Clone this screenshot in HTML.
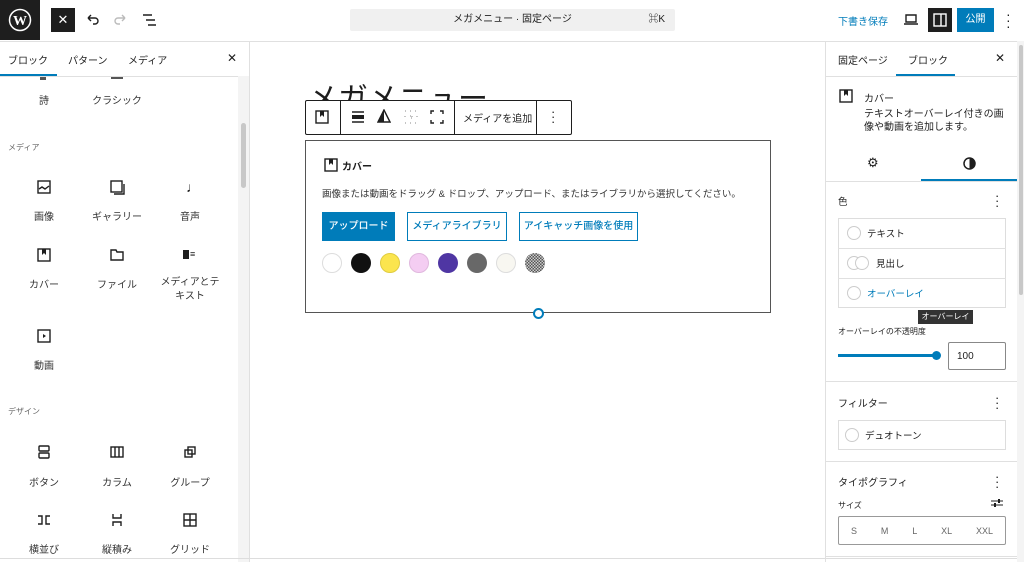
<!DOCTYPE html>
<html><head><meta charset="utf-8"><style>
*{box-sizing:border-box;margin:0;padding:0}
body{width:1024px;height:562px;overflow:hidden;background:#fff;font-family:"Liberation Sans","Noto Sans CJK JP",sans-serif;color:#1e1e1e;position:relative;font-size:11px}
.a{position:absolute}
.c{text-align:center}
svg{display:block}
.ic{stroke:#1e1e1e;fill:none;stroke-width:1.4}
.lbl{font-size:10px;color:#333;width:80px;text-align:center}
.sep{border-top:1px solid #e0e0e0}
</style></head><body>
<!-- top bar -->
<div class="a" style="left:0;top:0;width:40px;height:40px;background:#1e1e1e"></div>
<svg class="a" style="left:8px;top:8px" width="24" height="24" viewBox="0 0 24 24"><circle cx="12" cy="12" r="10.5" fill="none" stroke="#fff" stroke-width="1.5"/><text x="12" y="17" font-size="14" font-weight="bold" fill="#fff" text-anchor="middle" font-family="Liberation Serif">W</text></svg>
<div class="a c" style="left:51px;top:8px;width:24px;height:24px;background:#1e1e1e;color:#fff;font-size:13px;line-height:24px">✕</div>
<svg class="a" style="left:84px;top:12px" width="16" height="16"><path d="M4 6h7a3 3 0 0 1 0 6H9M4 6l3-3M4 6l3 3" class="ic"/></svg>
<svg class="a" style="left:113px;top:12px" width="16" height="16"><path d="M12 6H5a3 3 0 0 0 0 6h2M12 6l-3-3M12 6l-3 3" fill="none" stroke="#bbb" stroke-width="1.4"/></svg>
<svg class="a" style="left:142px;top:12px" width="16" height="16"><path d="M1 3h9M4 8h9M6 13h8" class="ic"/></svg>
<div class="a c" style="left:350px;top:9px;width:325px;height:22px;background:#f0f0f0;border-radius:2px;font-size:10px;line-height:22px">メガメニュー · 固定ページ<span class="a" style="right:10px;top:0">⌘K</span></div>
<div class="a" style="left:838px;top:13px;font-size:10px;color:#007cba">下書き保存</div>
<svg class="a" style="left:903px;top:13px" width="16" height="14"><path d="M3 2h10v7H3zM1 11h14" class="ic"/></svg>
<div class="a" style="left:928px;top:8px;width:24px;height:24px;background:#1e1e1e"></div>
<svg class="a" style="left:932px;top:12px" width="16" height="16"><rect x="2" y="2" width="12" height="12" fill="none" stroke="#fff" stroke-width="1.4"/><path d="M9 2v12" stroke="#fff" stroke-width="1.4"/></svg>
<div class="a c" style="left:957px;top:8px;width:37px;height:24px;background:#007cba;color:#fff;font-size:10px;line-height:24px">公開</div>
<div class="a" style="left:1006px;top:11px;font-size:14px;line-height:6px;width:4px;text-align:center">·<br>·<br>·</div>
<div class="a sep" style="left:0;top:41px;width:1024px"></div>
<!-- left panel -->
<div class="a" style="left:249px;top:41px;height:521px;border-left:1px solid #e0e0e0"></div>
<div class="a" style="left:8px;top:52px;font-size:10px">ブロック</div>
<div class="a" style="left:68px;top:52px;font-size:10px">パターン</div>
<div class="a" style="left:128px;top:52px;font-size:10px">メディア</div>
<div class="a" style="left:227px;top:51px;font-size:12px">✕</div>
<div class="a" style="left:0;top:74px;width:57px;height:2px;background:#007cba"></div>
<div class="a sep" style="left:0;top:76px;width:249px"></div>
<div class="a" style="left:238px;top:76px;width:11px;height:486px;background:#f4f4f4"></div>
<div class="a" style="left:241px;top:123px;width:5px;height:65px;background:#c8c8c8;border-radius:3px"></div>
<div class="a" style="left:40px;top:77px;width:6px;height:3px;background:#555"></div>
<div class="a" style="left:111px;top:77px;width:12px;height:2px;background:#555"></div>
<div class="a lbl" style="left:4px;top:92px">詩</div>
<div class="a lbl" style="left:77px;top:92px">クラシック</div>
<div class="a" style="left:8px;top:142px;font-size:8px;color:#666">メディア</div>
<svg class="a" style="left:37px;top:180px" width="14" height="14"><rect x="1" y="1" width="12" height="12" class="ic" stroke-width="1.2"/><path d="M2 9l3-2 3 2 4-3" class="ic" stroke-width="1"/></svg>
<svg class="a" style="left:110px;top:180px" width="16" height="16"><rect x="1" y="1" width="11" height="11" class="ic" stroke-width="1.2"/><path d="M14 4v10H4" class="ic" stroke-width="1.2"/></svg>
<div class="a" style="left:186px;top:179px;font-size:14px">♩</div>
<div class="a lbl" style="left:4px;top:208px">画像</div>
<div class="a lbl" style="left:77px;top:208px">ギャラリー</div>
<div class="a lbl" style="left:150px;top:208px">音声</div>
<svg class="a" style="left:37px;top:248px" width="14" height="14"><rect x="1" y="1" width="12" height="12" class="ic" stroke-width="1.2"/><path d="M5 1h4v6L7 5 5 7z" fill="#1e1e1e"/></svg>
<svg class="a" style="left:110px;top:248px" width="14" height="14"><path d="M1 2h5l1 2h6v8H1z" class="ic" stroke-width="1.2"/></svg>
<div class="a" style="left:183px;top:250px;width:6px;height:9px;background:#1e1e1e"></div><div class="a" style="left:190px;top:249px;font-size:9px">≡</div>
<div class="a lbl" style="left:4px;top:276px">カバー</div>
<div class="a lbl" style="left:77px;top:276px">ファイル</div>
<div class="a lbl" style="left:150px;top:276px;line-height:14px">メディアとテ<br>キスト</div>
<svg class="a" style="left:37px;top:329px" width="14" height="14"><rect x="1" y="1" width="12" height="12" class="ic" stroke-width="1.2"/><path d="M6 5l3 2-3 2z" fill="#1e1e1e"/></svg>
<div class="a lbl" style="left:4px;top:357px">動画</div>
<div class="a" style="left:8px;top:406px;font-size:8px;color:#666">デザイン</div>
<svg class="a" style="left:37px;top:445px" width="14" height="14"><rect x="2" y="1" width="10" height="5" rx="1" class="ic" stroke-width="1.2"/><rect x="2" y="8" width="10" height="5" rx="1" class="ic" stroke-width="1.2"/></svg>
<svg class="a" style="left:110px;top:445px" width="14" height="14"><rect x="1" y="2" width="12" height="10" class="ic" stroke-width="1.2"/><path d="M5 2v10M9 2v10" class="ic" stroke-width="1.2"/></svg>
<svg class="a" style="left:183px;top:445px" width="14" height="14"><rect x="2" y="5" width="7" height="7" class="ic" stroke-width="1.2"/><rect x="5" y="2" width="7" height="7" class="ic" stroke-width="1.2"/></svg>
<div class="a lbl" style="left:4px;top:474px">ボタン</div>
<div class="a lbl" style="left:77px;top:474px">カラム</div>
<div class="a lbl" style="left:150px;top:474px">グループ</div>
<svg class="a" style="left:37px;top:513px" width="14" height="14"><path d="M1 3h4v8H1M13 3H9v8h4" class="ic" stroke-width="1.2"/></svg>
<svg class="a" style="left:110px;top:513px" width="14" height="14"><path d="M3 1v4h8V1M3 13V9h8v4" class="ic" stroke-width="1.2"/></svg>
<svg class="a" style="left:183px;top:513px" width="14" height="14"><rect x="1" y="1" width="12" height="12" class="ic" stroke-width="1.2"/><path d="M7 1v12M1 7h12" class="ic" stroke-width="1.2"/></svg>
<div class="a lbl" style="left:4px;top:541px">横並び</div>
<div class="a lbl" style="left:77px;top:541px">縦積み</div>
<div class="a lbl" style="left:150px;top:541px">グリッド</div>
<div class="a sep" style="left:0;top:558px;width:1024px;border-color:#ddd"></div>
<!-- canvas -->
<div class="a" style="left:308px;top:80px;font-size:30px;font-weight:normal;color:#1e1e1e;line-height:40px">メガメニュー</div>
<div class="a" style="left:305px;top:100px;width:267px;height:35px;background:#fff;border:1px solid #1e1e1e;border-radius:2px"></div>
<div class="a" style="left:340px;top:100px;height:35px;border-left:1px solid #1e1e1e"></div>
<div class="a" style="left:454px;top:100px;height:35px;border-left:1px solid #1e1e1e"></div>
<div class="a" style="left:536px;top:100px;height:35px;border-left:1px solid #1e1e1e"></div>
<svg class="a" style="left:315px;top:110px" width="14" height="14"><rect x="1" y="1" width="12" height="12" class="ic" stroke-width="1.2"/><path d="M5 1h4v6L7 5 5 7z" fill="#1e1e1e"/></svg>
<svg class="a" style="left:351px;top:110px" width="14" height="14"><path d="M1 2h12M1 12h12" class="ic"/><rect x="1" y="5" width="12" height="4" fill="#1e1e1e"/></svg>
<svg class="a" style="left:377px;top:109px" width="14" height="14"><path d="M7 1L1 13h12z" class="ic" stroke-width="1.2"/><path d="M7 1L1 13h6z" fill="#1e1e1e"/></svg>
<svg class="a" style="left:404px;top:110px" width="14" height="14"><path d="M1 1h2M6 1h2M11 1h2M1 6v2M13 6v2M1 13h2M6 13h2M11 13h2M6 6h2v2H6" stroke="#888" stroke-width="1" fill="none" stroke-dasharray="1 1"/></svg>
<svg class="a" style="left:430px;top:110px" width="14" height="14"><path d="M1 4V1h3M10 1h3v3M13 10v3h-3M4 13H1v-3" class="ic" stroke-width="1.2"/></svg>
<div class="a" style="left:463px;top:110px;font-size:10px">メディアを追加</div>
<div class="a" style="left:551px;top:109px;font-size:13px;line-height:5px">·<br>·<br>·</div>
<div class="a" style="left:305px;top:140px;width:466px;height:173px;border:1px solid #555"></div>
<svg class="a" style="left:324px;top:158px" width="14" height="14"><rect x="1" y="1" width="12" height="12" class="ic" stroke-width="1.2"/><path d="M5 1h4v6L7 5 5 7z" fill="#1e1e1e"/></svg>
<div class="a" style="left:342px;top:158px;font-size:10px;font-weight:bold">カバー</div>
<div class="a" style="left:322px;top:186px;font-size:9.5px;color:#333">画像または動画をドラッグ &amp; ドロップ、アップロード、またはライブラリから選択してください。</div>
<div class="a c" style="left:322px;top:212px;width:73px;height:29px;background:#007cba;color:#fff;font-size:10px;line-height:29px;font-weight:500">アップロード</div>
<div class="a c" style="left:407px;top:212px;width:100px;height:29px;border:1px solid #007cba;color:#007cba;font-size:10px;line-height:27px;font-weight:500">メディアライブラリ</div>
<div class="a c" style="left:519px;top:212px;width:119px;height:29px;border:1px solid #007cba;color:#007cba;font-size:10px;line-height:27px;font-weight:500">アイキャッチ画像を使用</div>
<div class="a" style="left:322px;top:253px;width:20px;height:20px;border-radius:50%;background:#fff;border:1px solid #ddd"></div>
<div class="a" style="left:351px;top:253px;width:20px;height:20px;border-radius:50%;background:#111"></div>
<div class="a" style="left:380px;top:253px;width:20px;height:20px;border-radius:50%;background:#fbe54e;border:1px solid #e0cc40"></div>
<div class="a" style="left:409px;top:253px;width:20px;height:20px;border-radius:50%;background:#f4cdf2;border:1px solid #e0b8de"></div>
<div class="a" style="left:438px;top:253px;width:20px;height:20px;border-radius:50%;background:#4f36a3"></div>
<div class="a" style="left:467px;top:253px;width:20px;height:20px;border-radius:50%;background:#686868"></div>
<div class="a" style="left:496px;top:253px;width:20px;height:20px;border-radius:50%;background:#f8f7f1;border:1px solid #ddd"></div>
<div class="a" style="left:525px;top:253px;width:20px;height:20px;border-radius:50%;background:repeating-conic-gradient(#555 0 25%,#ccc 0 50%) 0 0/3px 3px"></div>
<div class="a" style="left:533px;top:308px;width:11px;height:11px;border-radius:50%;background:#fff;border:2px solid #007cba"></div>
<!-- right panel -->
<div class="a" style="left:825px;top:41px;height:521px;border-left:1px solid #e0e0e0"></div>
<div class="a" style="left:1017px;top:41px;width:7px;height:521px;background:#f4f4f4"></div>
<div class="a" style="left:1019px;top:45px;width:4px;height:250px;background:#c8c8c8;border-radius:2px"></div>
<div class="a" style="left:838px;top:52px;font-size:10px">固定ページ</div>
<div class="a" style="left:908px;top:52px;font-size:10px">ブロック</div>
<div class="a" style="left:995px;top:51px;font-size:12px">✕</div>
<div class="a" style="left:896px;top:74px;width:59px;height:2px;background:#007cba"></div>
<div class="a sep" style="left:826px;top:76px;width:191px"></div>
<svg class="a" style="left:839px;top:89px" width="14" height="14"><rect x="1" y="1" width="12" height="12" class="ic" stroke-width="1.2"/><path d="M5 1h4v6L7 5 5 7z" fill="#1e1e1e"/></svg>
<div class="a" style="left:864px;top:90px;font-size:10px">カバー</div>
<div class="a" style="left:864px;top:108px;font-size:10px;line-height:13px;width:145px">テキストオーバーレイ付きの画像や動画を追加します。</div>
<div class="a" style="left:867px;top:155px;font-size:13px">⚙</div>
<svg class="a" style="left:963px;top:157px" width="13" height="13"><circle cx="6.5" cy="6.5" r="5.5" fill="none" stroke="#1e1e1e" stroke-width="1.5"/><path d="M6.5 1a5.5 5.5 0 0 1 0 11z" fill="#1e1e1e"/></svg>
<div class="a" style="left:921px;top:179px;width:96px;height:2px;background:#007cba"></div>
<div class="a sep" style="left:826px;top:181px;width:191px"></div>
<div class="a" style="left:838px;top:194px;font-size:9.5px">色</div>
<div class="a" style="left:995px;top:193px;font-size:13px;line-height:5px">·<br>·<br>·</div>
<div class="a" style="left:838px;top:218px;width:168px;height:90px;border:1px solid #ddd"></div>
<div class="a sep" style="left:838px;top:248px;width:168px"></div>
<div class="a sep" style="left:838px;top:278px;width:168px"></div>
<div class="a" style="left:847px;top:226px;width:14px;height:14px;border-radius:50%;border:1px solid #ccc"></div>
<div class="a" style="left:847px;top:256px;width:14px;height:14px;border-radius:50%;border:1px solid #ccc"></div>
<div class="a" style="left:855px;top:256px;width:14px;height:14px;border-radius:50%;border:1px solid #ccc;background:#fff"></div>
<div class="a" style="left:847px;top:286px;width:14px;height:14px;border-radius:50%;border:1px solid #ccc"></div>
<div class="a" style="left:867px;top:226px;font-size:9.5px">テキスト</div>
<div class="a" style="left:876px;top:256px;font-size:9.5px">見出し</div>
<div class="a" style="left:867px;top:286px;font-size:9.5px;color:#007cba">オーバーレイ</div>
<div class="a c" style="left:918px;top:310px;width:55px;height:14px;background:#333;color:#fff;font-size:8px;line-height:14px">オーバーレイ</div>
<div class="a" style="left:838px;top:326px;font-size:8px">オーバーレイの不透明度</div>
<div class="a" style="left:838px;top:354px;width:99px;height:3px;background:#007cba"></div>
<div class="a" style="left:932px;top:351px;width:9px;height:9px;border-radius:50%;background:#007cba"></div>
<div class="a" style="left:948px;top:342px;width:58px;height:28px;border:1px solid #888;border-radius:2px;font-size:10px;padding:8px 0 0 8px">100</div>
<div class="a sep" style="left:826px;top:381px;width:191px"></div>
<div class="a" style="left:838px;top:395px;font-size:10px">フィルター</div>
<div class="a" style="left:995px;top:395px;font-size:13px;line-height:5px">·<br>·<br>·</div>
<div class="a" style="left:838px;top:420px;width:168px;height:30px;border:1px solid #ddd"></div>
<div class="a" style="left:845px;top:428px;width:14px;height:14px;border-radius:50%;border:1px solid #ccc"></div>
<div class="a" style="left:865px;top:428px;font-size:9.5px">デュオトーン</div>
<div class="a sep" style="left:826px;top:461px;width:191px"></div>
<div class="a" style="left:838px;top:474px;font-size:10px">タイポグラフィ</div>
<div class="a" style="left:995px;top:474px;font-size:13px;line-height:5px">·<br>·<br>·</div>
<div class="a" style="left:838px;top:500px;font-size:8px">サイズ</div>
<svg class="a" style="left:991px;top:498px" width="12" height="10"><path d="M0 3h12M0 7h12" stroke="#1e1e1e" stroke-width="1"/><rect x="7" y="1" width="2" height="4" fill="#1e1e1e"/><rect x="3" y="5" width="2" height="4" fill="#1e1e1e"/></svg>
<div class="a" style="left:838px;top:516px;width:168px;height:29px;border:1px solid #999;border-radius:2px;display:flex;justify-content:space-around;align-items:center;font-size:9px;color:#666"><span>S</span><span>M</span><span>L</span><span>XL</span><span>XXL</span></div>
<div class="a sep" style="left:826px;top:556px;width:191px"></div>
</body></html>
